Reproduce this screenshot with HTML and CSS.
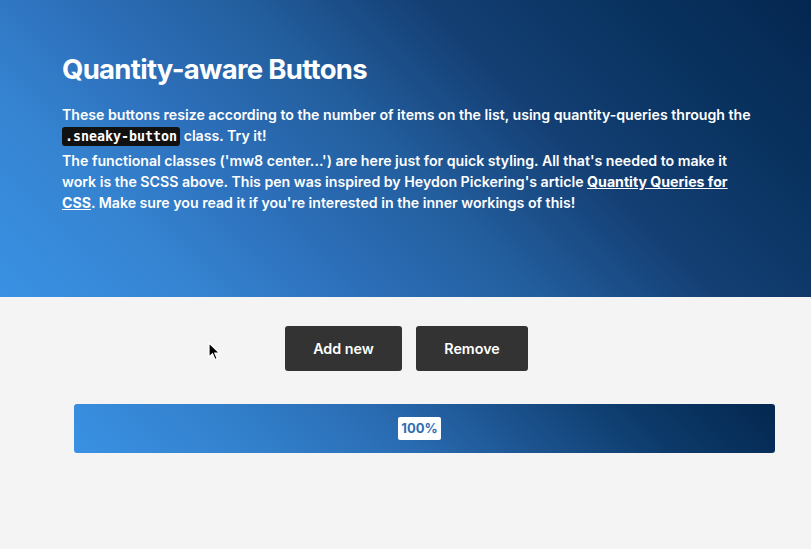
FILE: index.html
```html
<!DOCTYPE html>
<html lang="en">
<head>
<meta charset="utf-8">
<title>Quantity-aware Buttons</title>
<link rel="stylesheet" href="styles.css">
</head>
<body>
<header class="hero">
  <h1 class="title">Quantity-aware Buttons</h1>
  <p class="lead">These buttons resize according to the number of items on the list, using quantity-queries through the <code class="chip">.sneaky-button</code> class. Try it!</p>
  <p class="lead">The functional classes ('mw8 center...') are here just for quick styling. All that's needed to make it work is the SCSS above. This pen was inspired by Heydon Pickering's article <a class="link" href="#">Quantity Queries for CSS</a>. Make sure you read it if you're interested in the inner workings of this!</p>
</header>
<main class="content">
  <div class="actions">
    <button class="btn btn-add">Add new</button>
    <button class="btn btn-remove">Remove</button>
  </div>
  <div class="bar">
    <span class="bar-label">100%</span>
  </div>
  <svg class="cursor" width="14" height="20" viewBox="0 0 14 20"><path d="M1 1 L1 15 L4.5 11.8 L7 17.5 L9.2 16.5 L6.8 11 L11.5 11 Z" fill="#000" stroke="#fff" stroke-width="1.2"/></svg>
</main>
</body>
</html>
```

FILE: styles.css
```css
html, body {
  margin: 0;
  padding: 0;
  background: #f4f4f4;
  font-family: Inter, "Open Sans", "Liberation Sans", sans-serif;
}
.hero {
  height: 297px;
  box-sizing: border-box;
  padding: 52px 20px 0 62px;
  color: #fff;
  background: linear-gradient(45deg, #3a91e3 0%, #3584d2 18%, #2d70bb 32%, #235f9f 48%, #143f74 65%, #0a3462 80%, #042750 100%);
}
.title {
  margin: 0 0 19px 0;
  font-size: 27.5px;
  font-weight: 700;
  letter-spacing: -0.7px;
  line-height: 34px;
}
.lead {
  margin: 0 0 4px 0;
  font-size: 14.15px;
  font-weight: 600;
  line-height: 20.7px;
  letter-spacing: 0;
  max-width: 697px;
}
.chip {
  font-family: "DejaVu Sans Mono", "Liberation Mono", monospace;
  font-weight: 700;
  font-size: 13.3px;
  background: #111;
  color: #fff;
  padding: 2px 3px;
  border-radius: 3px;
}
.link {
  color: #fff;
  text-decoration: underline;
  font-weight: 700;
}
.content {
  position: relative;
  padding-top: 29px;
}
.actions {
  display: flex;
  justify-content: center;
  gap: 14px;
  padding-left: 2px;
}
.btn {
  height: 45px;
  border: none;
  border-radius: 3px;
  background: #333333;
  color: #fff;
  font-family: Inter, "Open Sans", "Liberation Sans", sans-serif;
  font-size: 14.3px;
  font-weight: 600;
}
.btn-add { width: 117px; }
.btn-remove { width: 112px; }
.bar {
  margin: 33px 36px 0 74px;
  height: 49px;
  border-radius: 3px;
  display: flex;
  align-items: center;
  justify-content: center;
  background: linear-gradient(45deg, #3a91e3 0%, #3280cc 25%, #2a6cb3 45%, #1c538f 62%, #0c3a6a 80%, #04274f 100%);
}
.bar-label {
  background: #fff;
  color: #2e6db3;
  font-size: 13px;
  font-weight: 700;
  padding: 3px 3px;
  border-radius: 2px;
  margin-right: 10px;
  line-height: 17px;
}
.cursor {
  position: absolute;
  left: 208px;
  top: 45px;
}
```
